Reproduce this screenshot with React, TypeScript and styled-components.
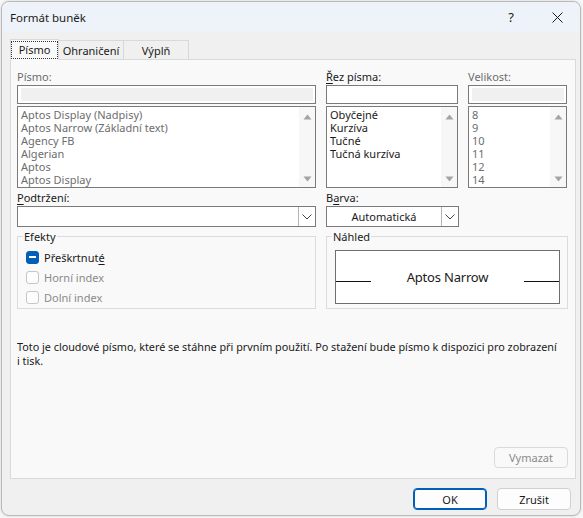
import * as React from "react";
import styled, { createGlobalStyle } from "styled-components";

const GlobalStyle = createGlobalStyle`
  html, body {
    margin: 0;
    padding: 0;
    background: #ffffff;
  }
  body {
    font-family: "Noto Sans", "Liberation Sans", sans-serif;
    font-size: 11px;
    color: #1a1a1a;
  }
`;

const Page = styled.div`
  width: 583px;
  height: 518px;
  padding: 1px 2px 2px 1px;
  box-sizing: border-box;
  background: #f7f7f7;
`;

const Window = styled.div`
  width: 580px;
  height: 515px;
  box-sizing: border-box;
  border: 1px solid #b9b9b9;
  border-radius: 8px;
  overflow: hidden;
  background: #f0f0f0;
  display: flex;
  flex-direction: column;
  box-shadow: 0 0 3px rgba(0, 0, 0, 0.15);
`;

const TitleBar = styled.div`
  height: 30px;
  flex: none;
  background: #eef3f9;
  display: flex;
  align-items: center;
  padding-left: 8px;
`;

const Title = styled.span`
  flex: 1;
  font-size: 11.5px;
  color: #1b1b1b;
`;

const TitleButton = styled.div`
  width: 46px;
  height: 30px;
  display: flex;
  align-items: center;
  justify-content: center;
  font-size: 13px;
  color: #1b1b1b;
`;

const Body = styled.div`
  flex: 1;
  display: flex;
  flex-direction: column;
  padding: 7px 5px 0 8px;
`;

const TabRow = styled.div`
  display: flex;
  align-items: flex-end;
  height: 20px;
  position: relative;
  z-index: 1;
`;

const Tab = styled.div<{ $active?: boolean; $w: number }>`
  box-sizing: border-box;
  width: ${(p) => p.$w}px;
  height: ${(p) => (p.$active ? "21px" : "19px")};
  display: flex;
  align-items: center;
  justify-content: center;
  border: 1px solid #d9d9d9;
  border-bottom: ${(p) => (p.$active ? "1px solid #f9f9f9" : "none")};
  margin-left: ${(p) => (p.$active ? "0" : "-1px")};
  margin-bottom: ${(p) => (p.$active ? "-1px" : "0")};
  background: ${(p) => (p.$active ? "#f9f9f9" : "#f0f0f0")};
  font-size: 11px;
  color: #1a1a1a;
`;

const FocusText = styled.span`
  outline: 1px dotted #333;
  padding: 0 7px;
  line-height: 16px;
`;

const Panel = styled.div`
  width: 566px;
  height: 420px;
  box-sizing: border-box;
  border: 1px solid #d9d9d9;
  background: #f9f9f9;
  padding: 9px 7px 0 6px;
  display: flex;
  flex-direction: column;
`;

const FieldGrid = styled.div`
  display: grid;
  grid-template-columns: 299px 132px 99px;
  column-gap: 10px;
`;

const Field = styled.div`
  display: flex;
  flex-direction: column;
`;

const Label = styled.div<{ $disabled?: boolean }>`
  height: 15px;
  line-height: 15px;
  font-size: 11px;
  color: ${(p) => (p.$disabled ? "#6d6d6d" : "#1a1a1a")};

  u {
    text-decoration-thickness: 1px;
    text-underline-offset: 2px;
  }
`;

const TextBox = styled.div<{ $disabled?: boolean }>`
  box-sizing: border-box;
  height: 19px;
  border: 1px solid #7a7a7a;
  background: #fff;
  padding: 2px 2px 2px 3px;
  margin-bottom: 2px;
  margin-top: 1px;

  &::after {
    content: "";
    display: block;
    height: 100%;
    background: ${(p) => (p.$disabled ? "#f0f0f0" : "#fff")};
  }
`;

const ListBox = styled.div`
  box-sizing: border-box;
  height: 82px;
  border: 1px solid #7a7a7a;
  background: #fff;
  display: flex;
`;

const ListItems = styled.div<{ $disabled?: boolean }>`
  flex: 1;
  padding: 1px 0 0 3px;
  overflow: hidden;
  color: ${(p) => (p.$disabled ? "#6d6d6d" : "#1a1a1a")};
`;

const ListItem = styled.div`
  height: 13px;
  line-height: 13px;
  font-size: 11px;
  white-space: nowrap;
`;

const ScrollTrack = styled.div`
  width: 16px;
  flex: none;
  background: #f7f7f7;
  display: flex;
  flex-direction: column;
  justify-content: space-between;
  align-items: center;
  padding: 7px 0 5px;
`;

const SecondRow = styled.div`
  display: grid;
  grid-template-columns: 299px 133px;
  column-gap: 10px;
  margin-top: 2px;
`;

const Combo = styled.div`
  box-sizing: border-box;
  height: 21px;
  margin-top: 1px;
  border: 1px solid #7a7a7a;
  background: #fff;
  display: flex;
  align-items: stretch;
`;

const ComboText = styled.div`
  flex: 1;
  display: flex;
  align-items: center;
  justify-content: center;
  font-size: 11px;
  color: #1a1a1a;
`;

const ComboButton = styled.div`
  width: 17px;
  box-sizing: border-box;
  border-left: 1px solid #b5b5b5;
  display: flex;
  align-items: center;
  justify-content: center;
`;

const GroupRow = styled.div`
  display: grid;
  grid-template-columns: 299px 242px;
  column-gap: 10px;
  margin-top: 9px;
`;

const Group = styled.div`
  box-sizing: border-box;
  height: 73px;
  border: 1px solid #dcdcdc;
  position: relative;
  padding: 10px 7px 0 8px;
`;

const GroupTitle = styled.div`
  position: absolute;
  top: -8px;
  left: 5px;
  padding: 0 1px;
  background: #f9f9f9;
  font-size: 11px;
  line-height: 15px;
  color: #1a1a1a;
`;

const CheckRow = styled.div<{ $disabled?: boolean }>`
  display: flex;
  align-items: center;
  height: 20px;
  gap: 5px;
  font-size: 11px;
  color: ${(p) => (p.$disabled ? "#8a8a8a" : "#1a1a1a")};

  u {
    text-underline-offset: 2px;
  }
`;

const CheckBox = styled.div<{ $checked?: boolean }>`
  width: 13px;
  height: 13px;
  box-sizing: border-box;
  border-radius: 3px;
  border: 1px solid ${(p) => (p.$checked ? "#005fb8" : "#c6c6c6")};
  background: ${(p) => (p.$checked ? "#005fb8" : "#fdfdfd")};
  display: flex;
  align-items: center;
  justify-content: center;

  &::after {
    content: "";
    display: ${(p) => (p.$checked ? "block" : "none")};
    width: 7px;
    height: 1.5px;
    background: #fff;
  }
`;

const Preview = styled.div`
  box-sizing: border-box;
  height: 54px;
  margin-top: 3px;
  border: 1px solid #6e6e6e;
  background: #fff;
  display: grid;
  grid-template-columns: 35px 1fr 35px;
  align-items: center;
`;

const PreviewRule = styled.div`
  height: 1px;
  background: #111;
  margin-top: 9px;
`;

const PreviewText = styled.div`
  text-align: center;
  font-family: "Noto Sans", sans-serif;
  font-size: 13px;
  letter-spacing: -0.2px;
  color: #1a1a1a;
`;

const Info = styled.div`
  margin-top: 31px;
  font-size: 10.8px;
  line-height: 14px;
  white-space: nowrap;
  color: #1a1a1a;
`;

const PanelFooter = styled.div`
  margin-top: auto;
  margin-bottom: 10px;
  display: flex;
  justify-content: flex-end;
`;

const DialogFooter = styled.div`
  display: flex;
  justify-content: flex-end;
  gap: 10px;
  padding: 9px 4px 0 0;
`;

const Button = styled.div<{ $primary?: boolean; $disabled?: boolean }>`
  box-sizing: border-box;
  width: 74px;
  height: ${(p) => (p.$disabled ? "21px" : "22px")};
  border-radius: 4px;
  border: 1px solid
    ${(p) => (p.$primary ? "#005fb8" : p.$disabled ? "#dadada" : "#d0d0d0")};
  box-shadow: ${(p) => (p.$primary ? "inset 0 0 0 1px #005fb8" : "none")};
  background: ${(p) => (p.$disabled ? "#f9f9f9" : "#fdfdfd")};
  display: flex;
  align-items: center;
  justify-content: center;
  font-size: 11px;
  color: ${(p) => (p.$disabled ? "#8a8a8a" : "#1a1a1a")};
`;

const Arrow = ({ down }: { down?: boolean }) => (
  <svg width="9" height="6" viewBox="0 0 9 6">
    <polygon
      points={down ? "0.5,0.5 8.5,0.5 4.5,5.5" : "0.5,5.5 8.5,5.5 4.5,0.5"}
      fill="#a3a3a3"
    />
  </svg>
);

const Chevron = () => (
  <svg width="10" height="6" viewBox="0 0 10 6">
    <polyline points="0.5,0.5 5,5 9.5,0.5" fill="none" stroke="#444" strokeWidth="1" />
  </svg>
);

const fonts = [
  "Aptos Display (Nadpisy)",
  "Aptos Narrow (Základní text)",
  "Agency FB",
  "Algerian",
  "Aptos",
  "Aptos Display",
];
const styles = ["Obyčejné", "Kurzíva", "Tučné", "Tučná kurzíva"];
const sizes = ["8", "9", "10", "11", "12", "14"];

function List({ items, disabled }: { items: string[]; disabled?: boolean }) {
  return (
    <ListBox>
      <ListItems $disabled={disabled}>
        {items.map((it) => (
          <ListItem key={it}>{it}</ListItem>
        ))}
      </ListItems>
      <ScrollTrack>
        <Arrow />
        <Arrow down />
      </ScrollTrack>
    </ListBox>
  );
}

export default function App() {
  return (
    <Page>
      <GlobalStyle />
      <Window>
        <TitleBar>
          <Title>Formát buněk</Title>
          <TitleButton>?</TitleButton>
          <TitleButton>
            <svg width="11" height="11" viewBox="0 0 11 11">
              <path d="M0.5 0.5 L10.5 10.5 M10.5 0.5 L0.5 10.5" stroke="#1b1b1b" strokeWidth="1" />
            </svg>
          </TitleButton>
        </TitleBar>
        <Body>
          <TabRow>
            <Tab $active $w={49}>
              <FocusText>Písmo</FocusText>
            </Tab>
            <Tab $w={66}>Ohraničení</Tab>
            <Tab $w={66}>Výplň</Tab>
          </TabRow>
          <Panel>
            <FieldGrid>
              <Field>
                <Label $disabled>Písmo:</Label>
                <TextBox $disabled />
                <List items={fonts} disabled />
              </Field>
              <Field>
                <Label>
                  <u>Ř</u>ez písma:
                </Label>
                <TextBox />
                <List items={styles} />
              </Field>
              <Field>
                <Label $disabled>Velikost:</Label>
                <TextBox $disabled />
                <List items={sizes} disabled />
              </Field>
            </FieldGrid>
            <SecondRow>
              <Field>
                <Label>
                  <u>P</u>odtržení:
                </Label>
                <Combo>
                  <ComboText />
                  <ComboButton>
                    <Chevron />
                  </ComboButton>
                </Combo>
              </Field>
              <Field>
                <Label>
                  B<u>a</u>rva:
                </Label>
                <Combo>
                  <ComboText>Automatická</ComboText>
                  <ComboButton>
                    <Chevron />
                  </ComboButton>
                </Combo>
              </Field>
            </SecondRow>
            <GroupRow>
              <Group>
                <GroupTitle>Efekty</GroupTitle>
                <CheckRow>
                  <CheckBox $checked />
                  <span>
                    Přeškrtnut<u>é</u>
                  </span>
                </CheckRow>
                <CheckRow $disabled>
                  <CheckBox />
                  <span>Horní index</span>
                </CheckRow>
                <CheckRow $disabled>
                  <CheckBox />
                  <span>Dolní index</span>
                </CheckRow>
              </Group>
              <Group>
                <GroupTitle>Náhled</GroupTitle>
                <Preview>
                  <PreviewRule />
                  <PreviewText>Aptos Narrow</PreviewText>
                  <PreviewRule />
                </Preview>
              </Group>
            </GroupRow>
            <Info>
              Toto je cloudové písmo, které se stáhne při prvním použití. Po stažení bude písmo k dispozici pro zobrazení
              <br />i tisk.
            </Info>
            <PanelFooter>
              <Button $disabled>Vymazat</Button>
            </PanelFooter>
          </Panel>
          <DialogFooter>
            <Button $primary>OK</Button>
            <Button>Zrušit</Button>
          </DialogFooter>
        </Body>
      </Window>
    </Page>
  );
}
